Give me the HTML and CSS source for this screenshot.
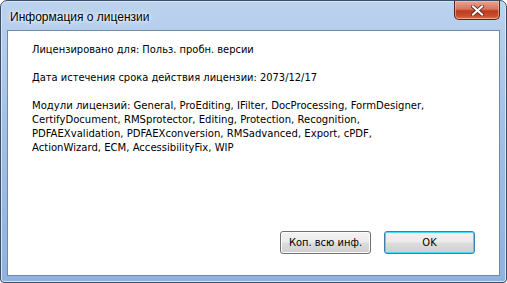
FILE: index.html
```html
<!DOCTYPE html>
<html lang="ru">
<head>
  <meta charset="UTF-8" />
  <title>Информация о лицензии</title>
  <link rel="stylesheet" href="styles.css">
</head>
<body>
  <div class="window">
    <div class="title-bar">
      <span class="title">Информация о лицензии</span>
      <button class="close-btn" aria-label="Закрыть">
        <svg width="13" height="11" viewBox="0 0 13 11">
          <path d="M2 1.5 L11 9.5 M11 1.5 L2 9.5" stroke="#4a1810" stroke-width="3.6" stroke-linecap="square"/>
          <path d="M2 1.5 L11 9.5 M11 1.5 L2 9.5" stroke="#fff" stroke-width="2.2" stroke-linecap="square"/>
        </svg>
      </button>
    </div>
    <div class="client">
      <div class="info">
        <p>Лицензировано для: Польз. пробн. версии</p>
        <p>Дата истечения срока действия лицензии: 2073/12/17</p>
        <p class="modules">Модули лицензий: General, ProEditing, IFilter, DocProcessing, FormDesigner,<br>CertifyDocument, RMSprotector, Editing, Protection, Recognition,<br>PDFAEXvalidation, PDFAEXconversion, RMSadvanced, Export, cPDF,<br>ActionWizard, ECM, AccessibilityFix, WIP</p>
      </div>
      <div class="buttons">
        <button class="btn">Коп. всю инф.</button>
        <button class="btn default">OK</button>
      </div>
    </div>
  </div>
</body>
</html>
```

FILE: styles.css
```css
body {
  margin: 0;
  width: 507px;
  height: 283px;
  background: #fff;
  font-family: "DejaVu Sans Condensed", "DejaVu Sans", sans-serif;
}
.window {
  box-sizing: border-box;
  width: 507px;
  height: 283px;
  border: 1px solid #3b4f6b;
  border-radius: 7px 7px 4px 4px;
  background: linear-gradient(to bottom, #bcd3ee 0%, #a4c2e8 40%, #8fb2e0 100%);
  box-shadow: inset 0 0 0 1px #d6e5f7;
  display: flex;
  flex-direction: column;
  padding: 0 6px 6px 6px;
}
.title-bar {
  height: 29px;
  display: flex;
  align-items: flex-start;
  justify-content: space-between;
}
.title {
  font-family: "Liberation Sans", Arial, sans-serif;
  font-size: 12px;
  color: #000;
  margin: 9px 0 0 3px;
  text-shadow: 0 0 6px #fff, 0 0 3px #fff;
}
.close-btn {
  width: 46px;
  height: 19px;
  padding: 0;
  border: 1px solid #5a2418;
  border-top: none;
  border-radius: 0 0 5px 5px;
  background: linear-gradient(to bottom, #e8a493 0%, #d9755c 45%, #c1391c 55%, #c9502e 85%, #e07e5a 100%);
  box-shadow: inset 0 0 0 1px rgba(255, 200, 180, 0.55);
  display: flex;
  align-items: center;
  justify-content: center;
}
.client {
  flex: 1;
  background: #fff;
  border: 1px solid #6f88ab;
  display: flex;
  flex-direction: column;
  justify-content: space-between;
  font-size: 11px;
  color: #000;
}
.info {
  padding: 12px 0 0 24px;
}
.info p {
  margin: 0 0 14px 0;
  line-height: 14px;
}
.modules {
  font-size: 11.2px;
}
.buttons {
  display: flex;
  justify-content: flex-end;
  gap: 13px;
  padding: 0 24px 21px 0;
}
.btn {
  box-sizing: border-box;
  height: 23px;
  min-width: 91px;
  padding: 0 3px;
  font-family: "DejaVu Sans Condensed", "DejaVu Sans", sans-serif;
  font-size: 11px;
  color: #000;
  border: 1px solid #707070;
  border-radius: 3px;
  background: linear-gradient(to bottom, #f2f2f2 0%, #ebebeb 48%, #dddddd 52%, #cfcfcf 100%);
  box-shadow: inset 0 0 0 1px #fcfcfc;
}
.btn.default {
  border-color: #3c7fb1;
  box-shadow: inset 0 0 0 1px #48d8fb;
}
```
